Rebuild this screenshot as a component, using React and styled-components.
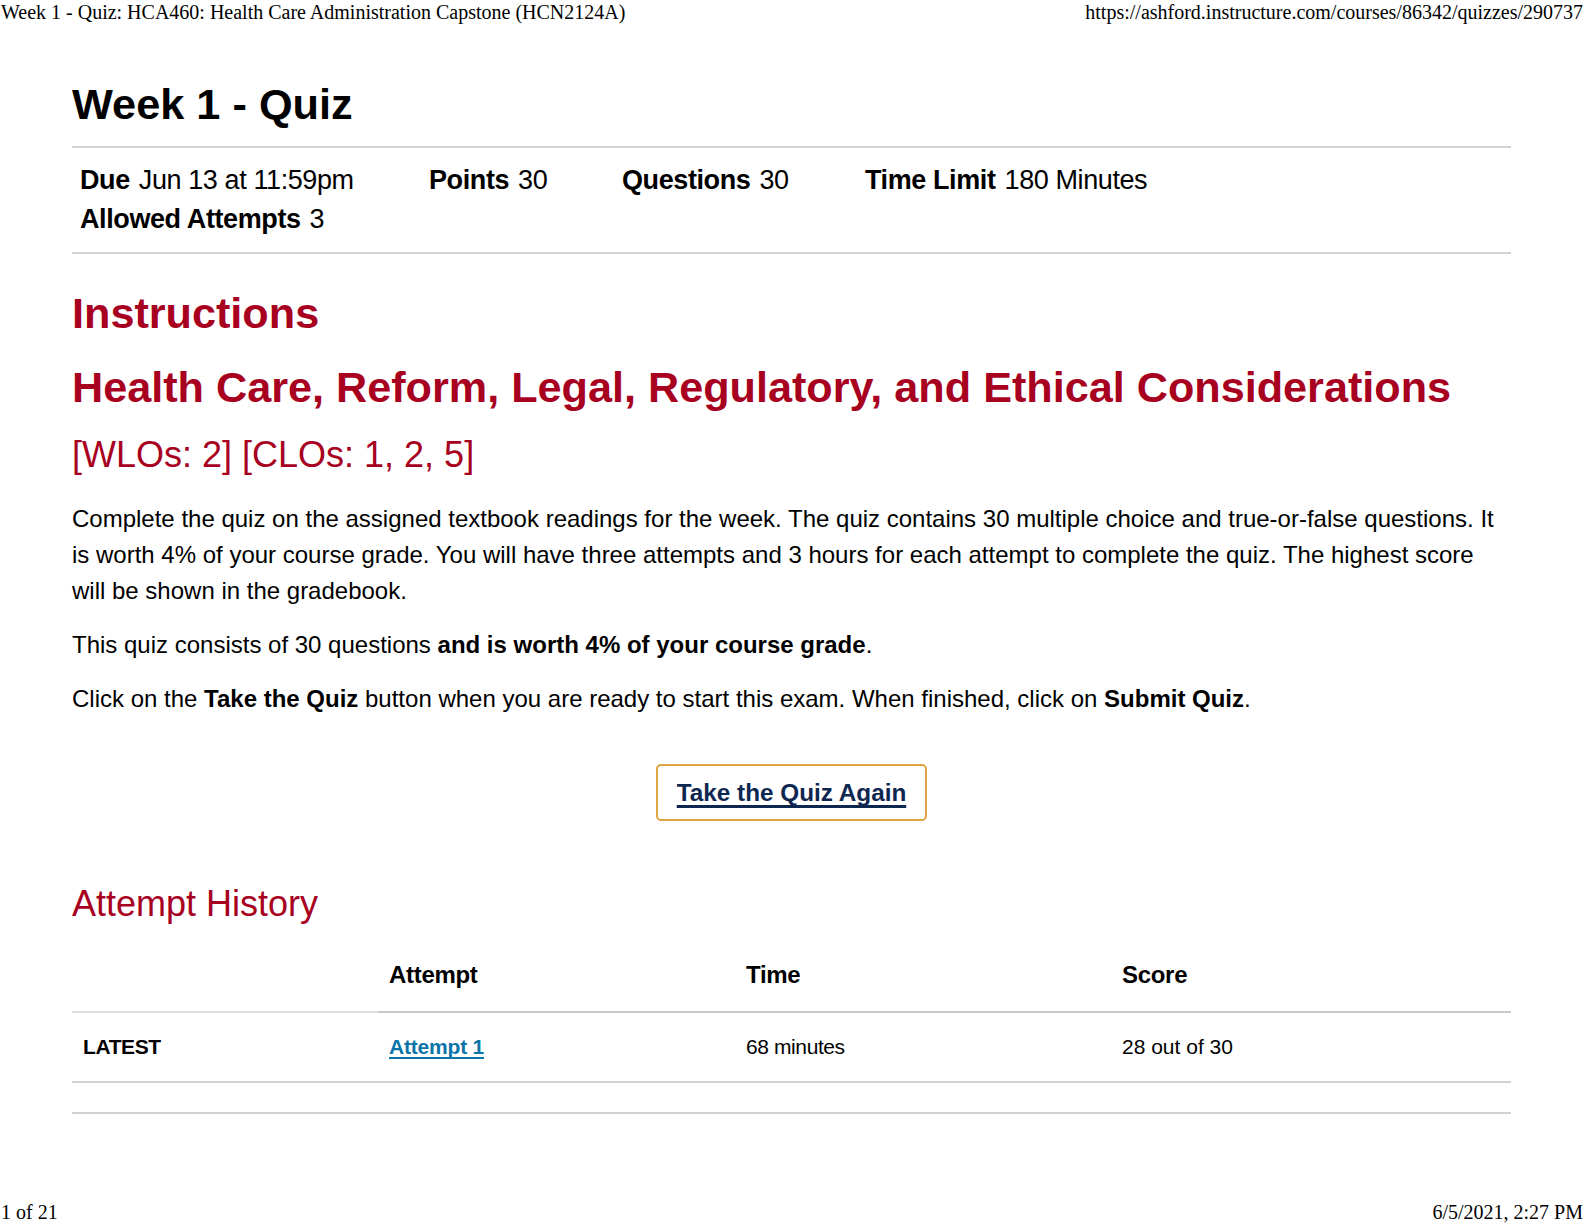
import React from 'react';
import styled, { createGlobalStyle } from 'styled-components';

const GlobalStyle = createGlobalStyle`
  html, body {
    margin: 0;
    padding: 0;
    background: #fff;
    overflow: hidden;
  }
  body {
    font-family: "Liberation Sans", Arial, sans-serif;
    color: #000;
  }
`;

const red = '#a8001f';

const Page = styled.div`
  width: 100%;
  height: 100vh;
  display: flex;
  flex-direction: column;
  box-sizing: border-box;
`;

const PrintBar = styled.div`
  display: flex;
  justify-content: space-between;
  align-items: center;
  height: 24px;
  padding: 0 1px 0 1px;
  font-family: "Liberation Serif", "Times New Roman", serif;
  font-size: 20px;
  color: #000;
`;

const Footer = styled(PrintBar)`
  margin-top: auto;
`;

const Content = styled.main`
  padding: 50px 73px 0 72px;
`;

const Title = styled.h1`
  margin: 0;
  font-size: 43.3px;
  font-weight: 700;
  line-height: 60px;
  padding-bottom: 12px;
  border-bottom: 2px solid #d3d4d6;
`;

const Details = styled.div`
  display: grid;
  grid-template-columns: 349px 193px 243px auto;
  row-gap: 3px;
  padding: 14px 8px 15px;
  border-bottom: 2px solid #d3d4d6;
`;

const Detail = styled.div`
  font-size: 27px;
  line-height: 36px;
  letter-spacing: -0.4px;
  white-space: nowrap;

  b {
    font-weight: 700;
    margin-right: 9px;
  }
`;

const RedHeading = styled.h2`
  margin: 0;
  color: ${red};
  font-size: ${p => p.size}px;
  font-weight: ${p => (p.bold ? 700 : 400)};
  line-height: ${p => p.lh}px;
  margin-top: ${p => p.mt || 0}px;
`;

const Para = styled.p`
  margin: ${p => p.mt || 0}px 0 0;
  font-size: 24px;
  line-height: 36px;
`;

const ButtonRow = styled.div`
  display: flex;
  justify-content: center;
  margin-top: 47px;
`;

const QuizButton = styled.a`
  display: inline-flex;
  align-items: center;
  justify-content: center;
  box-sizing: border-box;
  width: 271px;
  height: 57px;
  border: 2px solid #e0a43e;
  border-radius: 5px;
  font-size: 24.3px;
  font-weight: 700;
  color: #0e2750;
  text-decoration: underline;
  text-decoration-skip-ink: none;
  text-underline-offset: 4px;
  text-decoration-thickness: 3px;
  cursor: pointer;
`;

const Table = styled.table`
  width: 100%;
  border-collapse: collapse;
  table-layout: fixed;
  margin-top: 11px;
`;

const Col = styled.col`
  width: ${p => p.w || 'auto'};
`;

const Th = styled.th`
  text-align: left;
  font-size: 24px;
  font-weight: 700;
  letter-spacing: -0.3px;
  height: 72px;
  padding: 0 11px;
  border-bottom: 2px solid ${p => (p.first ? '#dcdde0' : '#c6c8cc')};
`;

const Td = styled.td`
  font-size: 21px;
  height: 68px;
  padding: 0 11px;
  border-bottom: 2px solid #cfd1d4;
  font-weight: ${p => (p.bold ? 700 : 400)};
  letter-spacing: ${p => (p.narrow ? '-0.4px' : '0')};
`;

const AttemptLink = styled.a`
  color: #0b74a8;
  font-weight: 700;
  text-decoration: underline;
  text-decoration-skip-ink: none;
  text-decoration-thickness: 2px;
  text-underline-offset: 3px;
  letter-spacing: -0.2px;
`;

const EndRule = styled.div`
  height: 29px;
  border-bottom: 2px solid #cfd1d4;
`;

const details = [
  ['Due', 'Jun 13 at 11:59pm'],
  ['Points', '30'],
  ['Questions', '30'],
  ['Time Limit', '180 Minutes'],
  ['Allowed Attempts', '3'],
];

export default function App() {
  return (
    <Page>
      <GlobalStyle />
      <PrintBar>
        <span>Week 1 - Quiz: HCA460: Health Care Administration Capstone (HCN2124A)</span>
        <span>https://ashford.instructure.com/courses/86342/quizzes/290737</span>
      </PrintBar>
      <Content>
        <Title>Week 1 - Quiz</Title>
        <Details>
          {details.map(([k, v]) => (
            <Detail key={k}>
              <b>{k}</b>{v}
            </Detail>
          ))}
        </Details>

        <RedHeading bold size={43.2} lh={52} mt={33}>Instructions</RedHeading>
        <RedHeading bold size={43.2} lh={52} mt={22}>
          Health Care, Reform, Legal, Regulatory, and Ethical Considerations
        </RedHeading>
        <RedHeading size={36} lh={44} mt={20}>[WLOs: 2] [CLOs: 1, 2, 5]</RedHeading>

        <Para mt={24}>
          Complete the quiz on the assigned textbook readings for the week. The quiz contains 30 multiple
          choice and true-or-false questions. It is worth 4% of your course grade. You will have three
          attempts and 3 hours for each attempt to complete the quiz. The highest score will be shown in
          the gradebook.
        </Para>
        <Para mt={18}>
          This quiz consists of 30 questions <b>and is worth 4% of your course grade</b>.
        </Para>
        <Para mt={18}>
          Click on the <b>Take the Quiz</b> button when you are ready to start this exam. When finished,
          click on <b>Submit Quiz</b>.
        </Para>

        <ButtonRow>
          <QuizButton>Take the Quiz Again</QuizButton>
        </ButtonRow>

        <RedHeading size={36} lh={48} mt={59}>Attempt History</RedHeading>

        <Table>
          <colgroup>
            <Col w="306px" />
            <Col w="357px" />
            <Col w="376px" />
            <Col />
          </colgroup>
          <thead>
            <tr>
              <Th first></Th>
              <Th>Attempt</Th>
              <Th>Time</Th>
              <Th>Score</Th>
            </tr>
          </thead>
          <tbody>
            <tr>
              <Td bold narrow>LATEST</Td>
              <Td><AttemptLink>Attempt 1</AttemptLink></Td>
              <Td narrow>68 minutes</Td>
              <Td>28 out of 30</Td>
            </tr>
          </tbody>
        </Table>
        <EndRule />
      </Content>
      <Footer>
        <span>1 of 21</span>
        <span>6/5/2021, 2:27 PM</span>
      </Footer>
    </Page>
  );
}
